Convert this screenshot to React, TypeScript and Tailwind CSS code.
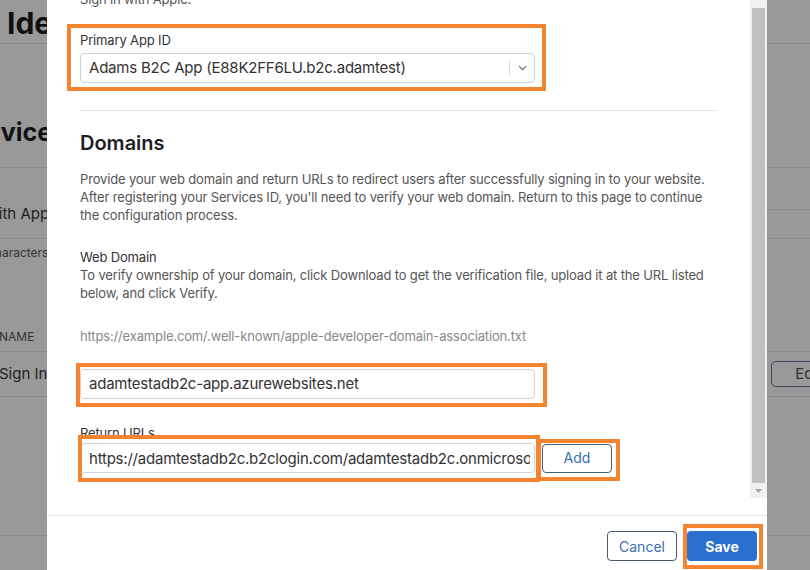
import { ReactNode } from 'react';

function BackgroundPage() {
  return (
    <div className="w-[810px] text-[#111]">
      <div className="h-[44px] border-b border-[#8a8a8a] pl-[7px] pt-[5px] text-[30px] font-bold leading-[36px]">
        Identifiers
      </div>

      <div className="h-[124px] border-b border-[#8a8a8a] pt-[73px]">
        <div className="-ml-[41px] text-[25px] font-bold leading-[30px]">Services ID Configuration</div>
      </div>

      <div className="flex h-[71px] justify-between border-b border-[#8a8a8a]">
        <div className="-ml-[16px] pt-[35px] text-[15px] leading-[22px] text-[#222]">With Apple</div>
        <div className="mt-[41px] w-[43px] border-t border-[#8a8a8a]" />
      </div>

      <div className="-ml-[12px] pt-[6px] text-[12px] leading-[16px] text-[#333]">characters</div>

      <div className="h-[91px] border-b border-[#8a8a8a] pt-[68px] text-[12px] leading-[16px] text-[#333]">
        <div className="-ml-[1px]">NAME</div>
      </div>

      <div className="flex h-[45px] items-center justify-between border-b border-[#8a8a8a]">
        <div className="-ml-[1px] text-[15px] text-[#222]">Sign In with Apple</div>
        <div className="-mr-[36px] rounded-[5px] border border-[#3d4b5a] px-[23px] py-[2px] text-[15px] leading-[20px] text-[#333]">
          Edit
        </div>
      </div>

      <div className="h-[139px] border-b border-[#8a8a8a]" />
    </div>
  );
}

function Scrollbar() {
  return (
    <div className="flex w-[17px] flex-col items-center bg-[#f1f1f1]">
      <div className="mt-[8px] h-[475px] w-[13px] bg-[#c1c1c1]" />
      <svg className="mt-[6px]" width="7" height="4" viewBox="0 0 7 4">
        <path d="M0 0h7L3.5 4z" fill="#a3a3a3" />
      </svg>
    </div>
  );
}

function Field({ children, className = '' }: { children: ReactNode; className?: string }) {
  return (
    <div
      className={`flex h-[30px] w-[455px] items-center rounded-[4px] border border-[#d4d4d4] bg-white text-[15px] tracking-[-0.22px] text-[#333] ${className}`}
    >
      {children}
    </div>
  );
}

function Modal() {
  return (
    <div className="absolute inset-y-0 left-[47px] flex w-[720px] flex-col bg-white">
      <div className="flex h-[498px]">
        <div className="flex-1 overflow-hidden pl-[33px] pr-[32px] text-[13px] leading-[18px] tracking-[-0.15px]">
          <p className="-mt-[10px] text-[#555]">Sign in with Apple.</p>

          <div className="mt-[23px] text-[#333]">Primary App ID</div>
          <Field className="mt-[4px]">
            <span className="flex-1 truncate pl-[8px]">Adams B2C App (E88K2FF6LU.b2c.adamtest)</span>
            <span className="h-[16px] w-px bg-[#d8d8d8]" />
            <span className="flex w-[24px] justify-center">
              <svg width="9" height="6" viewBox="0 0 9 6">
                <path d="M1 1.2l3.5 3.5L8 1.2" fill="none" stroke="#666" strokeWidth="1.2" />
              </svg>
            </span>
          </Field>

          <div className="mt-[27px] border-t border-[#e8e8e8]" />

          <h2 className="mt-[20px] text-[20px] font-semibold leading-[24px] tracking-normal text-[#1d1d1f]">Domains</h2>
          <p className="mt-[15px] whitespace-nowrap text-[#555]">
            Provide your web domain and return URLs to redirect users after successfully signing in to your website.
            <br />
            After registering your Services ID, you'll need to verify your web domain. Return to this page to continue
            <br />
            the configuration process.
          </p>

          <div className="mt-[24px] text-[#333]">Web Domain</div>
          <p className="whitespace-nowrap text-[#555]">
            To verify ownership of your domain, click Download to get the verification file, upload it at the URL listed
            <br />
            below, and click Verify.
          </p>
          <div className="mt-[25px] text-[#888]">https://example.com/.well-known/apple-developer-domain-association.txt</div>

          <Field className="mt-[24px]">
            <span className="pl-[8px]">adamtestadb2c-app.azurewebsites.net</span>
          </Field>

          <div className="mt-[25px] text-[#333]">Return URLs</div>
          <div className="mt-px flex items-center gap-[7px]">
            <input
              readOnly
              value="https://adamtestadb2c.b2clogin.com/adamtestadb2c.onmicrosoft.com/oauth2/authresp"
              className="h-[30px] w-[455px] rounded-[4px] border border-[#d4d4d4] bg-white pl-[8px] pr-[4px] font-['Inter',sans-serif] text-[15px] tracking-[-0.22px] text-[#333] outline-none"
            />
            <button className="h-[29px] w-[70px] rounded-[4px] border border-[#4a5b6c] text-[14px] tracking-normal text-[#3a6db4]">
              Add
            </button>
          </div>
        </div>
        <Scrollbar />
      </div>

      <div className="mt-[17px] flex justify-end gap-[10px] border-t border-[#e6e6e6] pr-[10px] pt-[15px]">
        <button className="h-[30px] w-[70px] rounded-[4px] border border-[#4a5b6c] text-[14px] text-[#3a6db4]">
          Cancel
        </button>
        <button className="h-[30px] w-[70px] rounded-[4px] bg-[#2a6fce] text-[14px] font-bold text-white">Save</button>
      </div>
    </div>
  );
}

export default function App() {
  return (
    <div className="relative h-[570px] w-[810px] overflow-hidden bg-[#999999] font-['Inter',sans-serif]">
      <BackgroundPage />
      <Modal />

      {/* annotation boxes drawn over the screenshot */}
      <div className="absolute left-[67px] top-[24px] h-[67px] w-[479px] border-4 border-[#f4842f]" />
      <div className="absolute left-[76px] top-[363px] h-[44px] w-[471px] border-4 border-[#f4842f]" />
      <div className="absolute left-[78px] top-[435px] h-[47px] w-[462px] border-4 border-[#f4842f]" />
      <div className="absolute left-[537px] top-[439px] h-[42px] w-[83px] border-4 border-[#f4842f]" />
      <div className="absolute left-[683px] top-[524px] h-[45px] w-[80px] border-4 border-[#f4842f]" />
    </div>
  );
}
